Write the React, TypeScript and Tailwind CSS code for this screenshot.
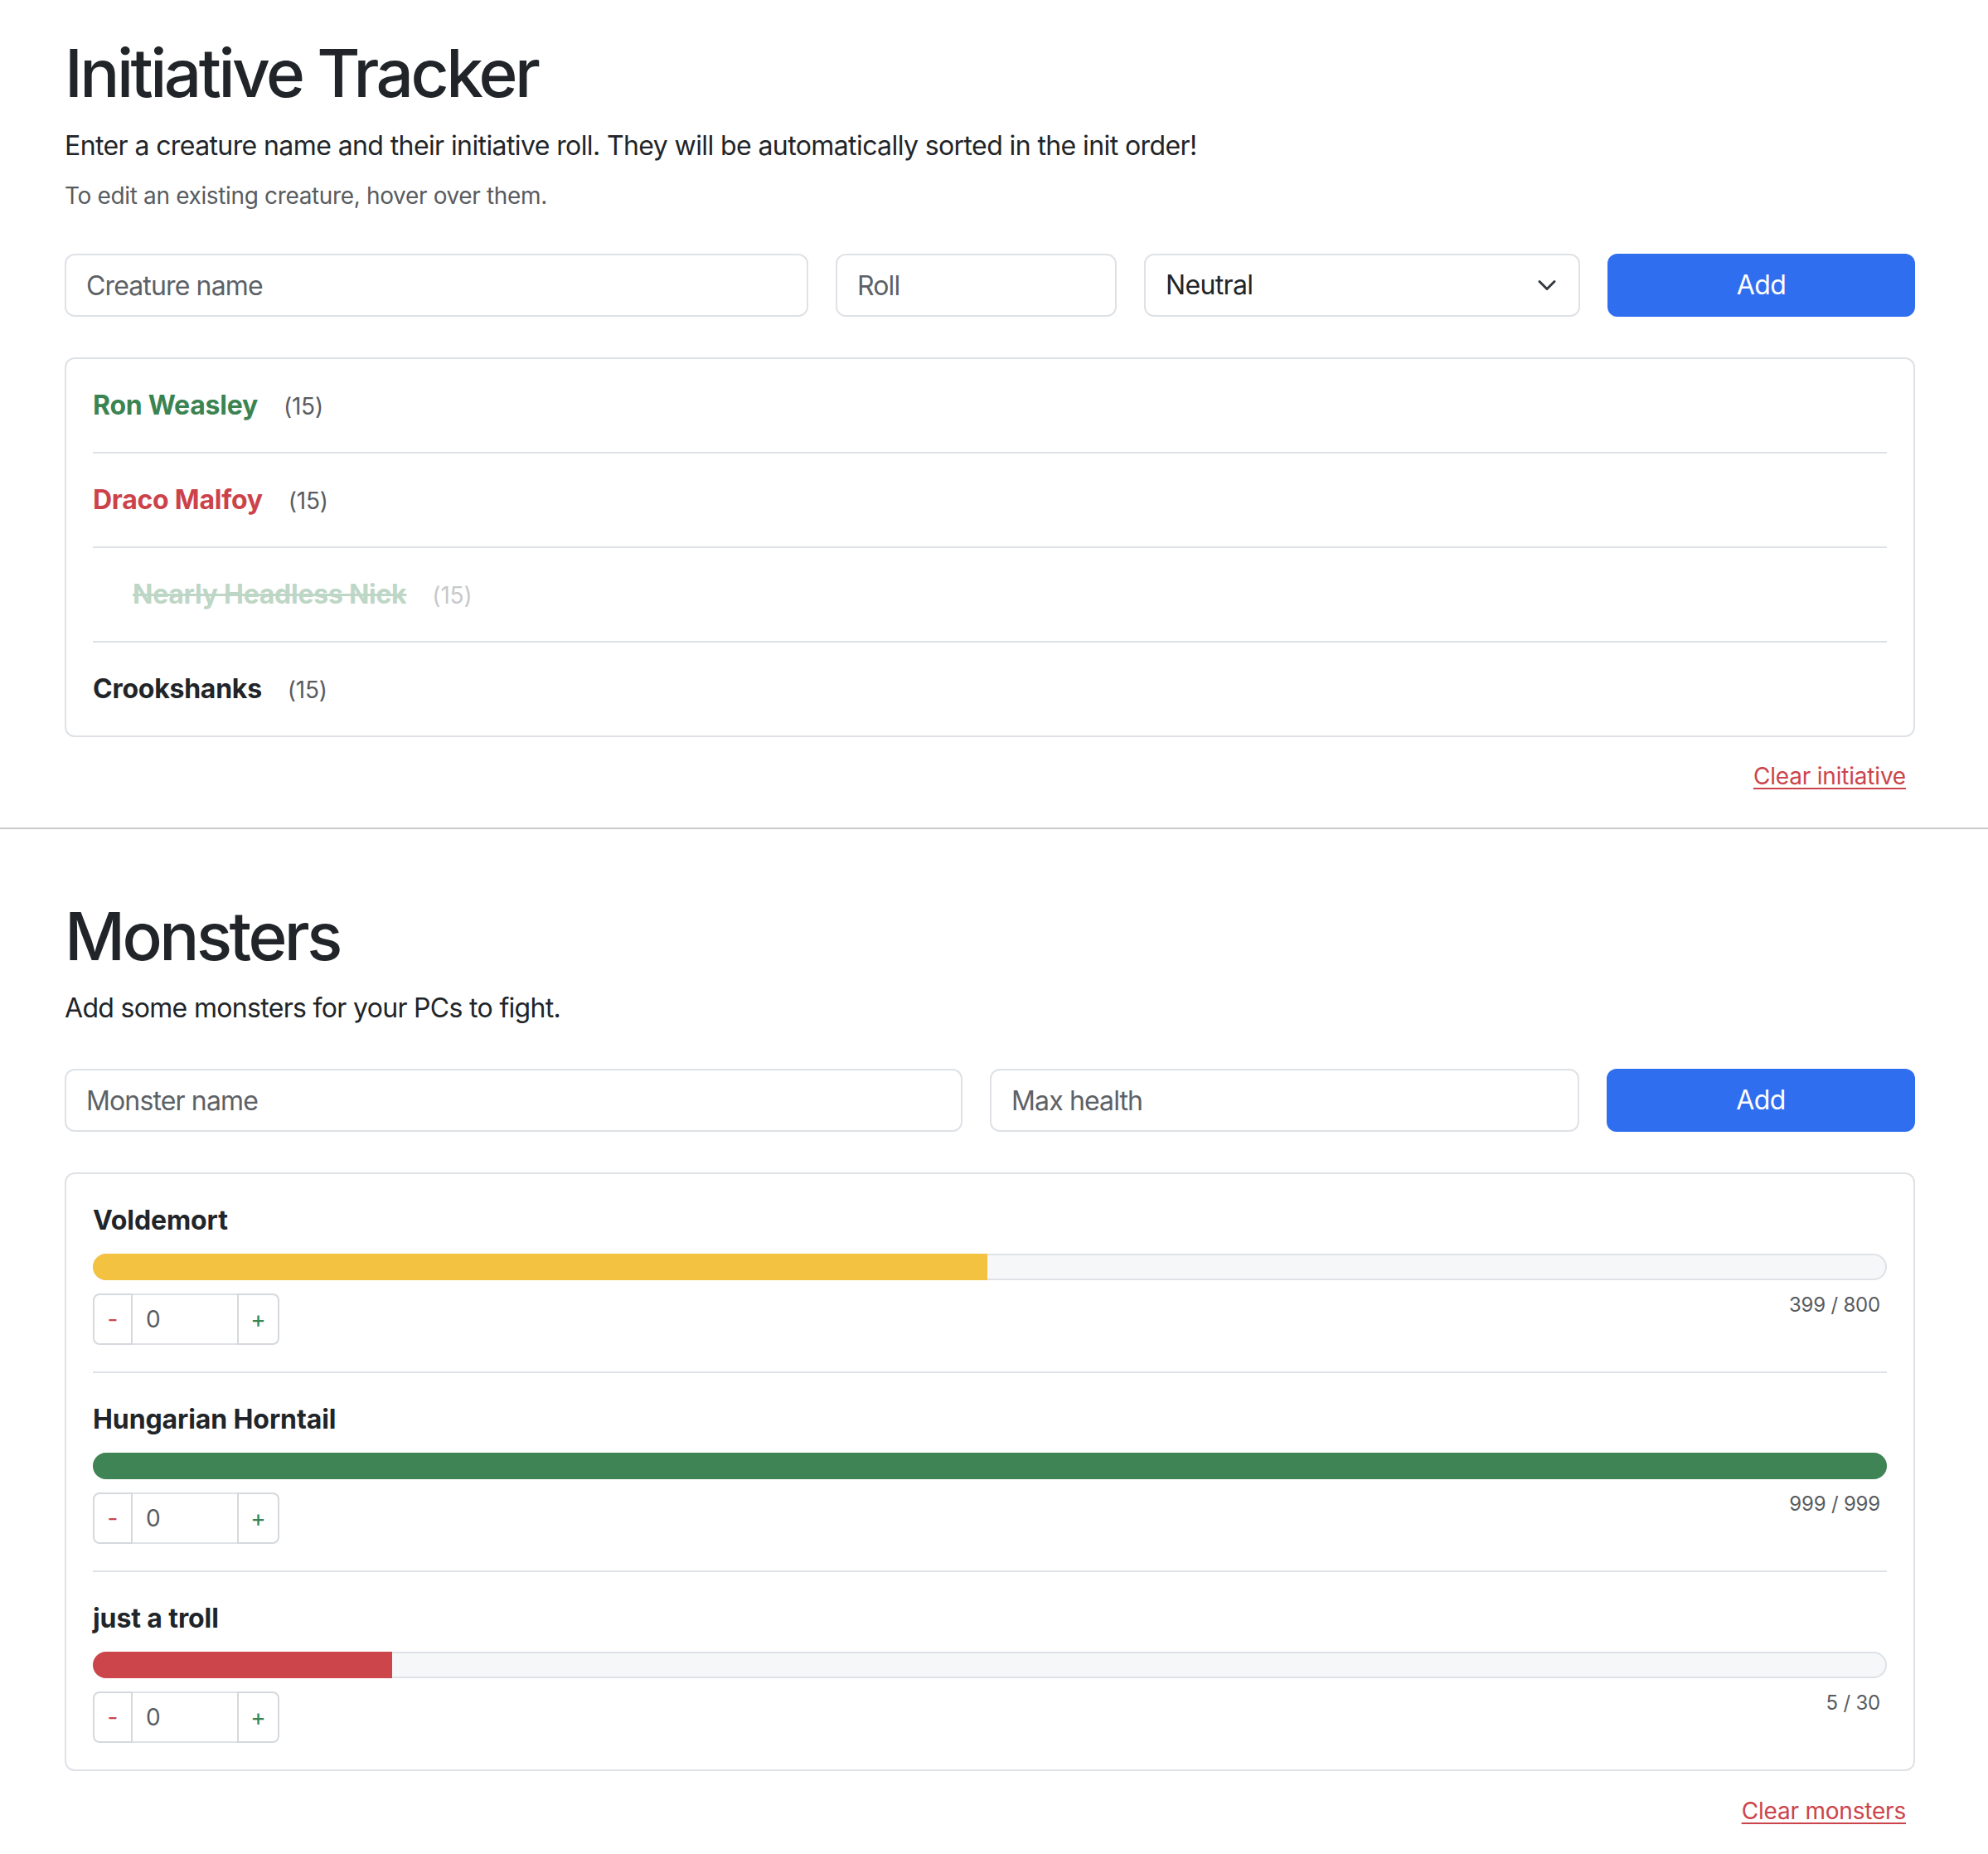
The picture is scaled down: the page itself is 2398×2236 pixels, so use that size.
import React from "react";

const initiative = [
  { name: "Ron Weasley", roll: 15, kind: "ally" },
  { name: "Draco Malfoy", roll: 15, kind: "enemy" },
  { name: "Nearly Headless Nick", roll: 15, kind: "dead" },
  { name: "Crookshanks", roll: 15, kind: "neutral" },
];

const monsters = [
  { name: "Voldemort", hp: 399, max: 800, color: "yellow" },
  { name: "Hungarian Horntail", hp: 999, max: 999, color: "green" },
  { name: "just a troll", hp: 5, max: 30, color: "red" },
];

function Field({ placeholder }: { placeholder: string }) {
  return (
    <input
      readOnly
      placeholder={placeholder}
      className="h-[76px] w-full rounded-[12px] border-2 border-[#dee2e6] bg-white px-[24px] text-[32px] leading-[48px] tracking-[-0.027em] text-[#212529] outline-none placeholder:text-[#5d6166]"
    />
  );
}

function AddButton() {
  return (
    <button className="flex h-[76px] w-full items-center justify-center rounded-[12px] bg-[#306ef0] text-[32px] leading-[48px] tracking-[-0.02em] text-white">
      Add
    </button>
  );
}

function nameColor(kind: string) {
  if (kind === "ally") return "text-[#3b8452]";
  if (kind === "enemy") return "text-[#cc424a]";
  if (kind === "dead") return "text-[#3b8452] line-through";
  return "text-[#212529]";
}

function barColor(c: string) {
  if (c === "yellow") return "bg-[#f3c241]";
  if (c === "green") return "bg-[#3f8455]";
  return "bg-[#cb454b]";
}

export default function App() {
  return (
    <div className="min-h-[2236px] bg-white font-[Inter,'Noto_Sans',sans-serif] text-[#212529]">
      <section className="ml-[78px] w-[2232px] pt-[40px]">
        <h1 className="text-[80px] leading-[96px] font-medium tracking-[-0.044em]">Initiative Tracker</h1>
        <p className="mt-[16px] text-[32px] leading-[48px] tracking-[-0.6px]">
          Enter a creature name and their initiative roll. They will be automatically sorted in the init order!
        </p>
        <p className="mt-[15px] text-[28px] leading-[42px] tracking-[-0.35px] text-[#595c5f]">
          To edit an existing creature, hover over them.
        </p>

        <div className="mt-[49px] grid grid-cols-[897px_339px_526px_1fr] gap-x-[33px]">
          <Field placeholder="Creature name" />
          <Field placeholder="Roll" />
          <div className="flex h-[76px] items-center justify-between rounded-[12px] border-2 border-[#dee2e6] bg-white pl-[24px] pr-[22px] text-[32px] leading-[48px] tracking-[-0.02em] text-[#212529]">
            <span>Neutral</span>
            <svg width="32" height="24" viewBox="0 0 16 16" fill="none" stroke="#343a40" strokeWidth="2" strokeLinecap="round" strokeLinejoin="round">
              <path d="m2 5 6 6 6-6" />
            </svg>
          </div>
          <AddButton />
        </div>

        <div className="mt-[49px] rounded-[12px] border-2 border-[#dee2e6] px-[32px]">
          {initiative.map((c, i) => (
            <div
              key={c.name}
              className={
                (i < initiative.length - 1 ? "border-b-2 border-[#dee2e6] " : "") +
                "flex items-baseline py-[32px]"
              }
            >
              <div className={c.kind === "dead" ? "flex items-baseline pl-[48px] opacity-[0.33]" : "flex items-baseline"}>
                <span className={"text-[32px] leading-[48px] font-bold tracking-[-0.25px] " + nameColor(c.kind)}>{c.name}</span>
                <span className="ml-[31px] text-[28px] leading-[42px] tracking-[-0.2px] text-[#595c5f]">({c.roll})</span>
              </div>
            </div>
          ))}
        </div>

        <div className="mt-[26px] flex justify-end pr-[11px]">
          <span className="text-[28px] leading-[42px] tracking-[-0.2px] text-[#cb444b] underline decoration-2 underline-offset-[4px]">
            Clear initiative
          </span>
        </div>
      </section>

      <div className="mt-[41px] h-[2px] w-full bg-[#c9cacb]" />

      <section className="ml-[78px] w-[2232px] pt-[81px] pb-[40px]">
        <h1 className="text-[80px] leading-[96px] font-medium tracking-[-0.044em]">Monsters</h1>
        <p className="mt-[15px] text-[32px] leading-[48px] tracking-[-0.68px]">Add some monsters for your PCs to fight.</p>

        <div className="mt-[49px] grid grid-cols-[1083px_711px_1fr] gap-x-[33px]">
          <Field placeholder="Monster name" />
          <Field placeholder="Max health" />
          <AddButton />
        </div>

        <div className="mt-[49px] rounded-[12px] border-2 border-[#dee2e6] px-[32px]">
          {monsters.map((m, i) => (
            <div
              key={m.name}
              className={(i < monsters.length - 1 ? "border-b-2 border-[#dee2e6] " : "") + "py-[32px]"}
            >
              <div className="text-[32px] leading-[48px] font-bold tracking-[-0.1px]">{m.name}</div>
              <div className="mt-[16px] h-[32px] overflow-hidden rounded-full bg-[#f6f7f9] shadow-[inset_0_0_0_2px_#dee2e6]">
                <div className={"h-full " + barColor(m.color)} style={{ width: `${(m.hp / m.max) * 100}%` }} />
              </div>
              <div className="mt-[16px] flex items-start justify-between">
                <div className="flex h-[62px] text-[28px] leading-[42px]">
                  <div className="flex w-[48px] items-center justify-center rounded-l-[8px] border-2 border-[#d5d9dd] text-[#cb444b]">
                    -
                  </div>
                  <div className="flex w-[126px] items-center border-y-2 border-[#dee2e6] pl-[16px] text-[#595c5f]">
                    0
                  </div>
                  <div className="flex w-[51px] items-center justify-center rounded-r-[8px] border-2 border-[#d5d9dd] text-[#3b8452]">
                    +
                  </div>
                </div>
                <div className="pr-[8px] text-[24px] leading-[28px] tracking-[-0.2px] text-[#595c5f]">
                  {m.hp} / {m.max}
                </div>
              </div>
            </div>
          ))}
        </div>

        <div className="mt-[27px] flex justify-end pr-[11px]">
          <span className="text-[28px] leading-[42px] tracking-[-0.2px] text-[#cb444b] underline decoration-2 underline-offset-[4px]">
            Clear monsters
          </span>
        </div>
      </section>
    </div>
  );
}
